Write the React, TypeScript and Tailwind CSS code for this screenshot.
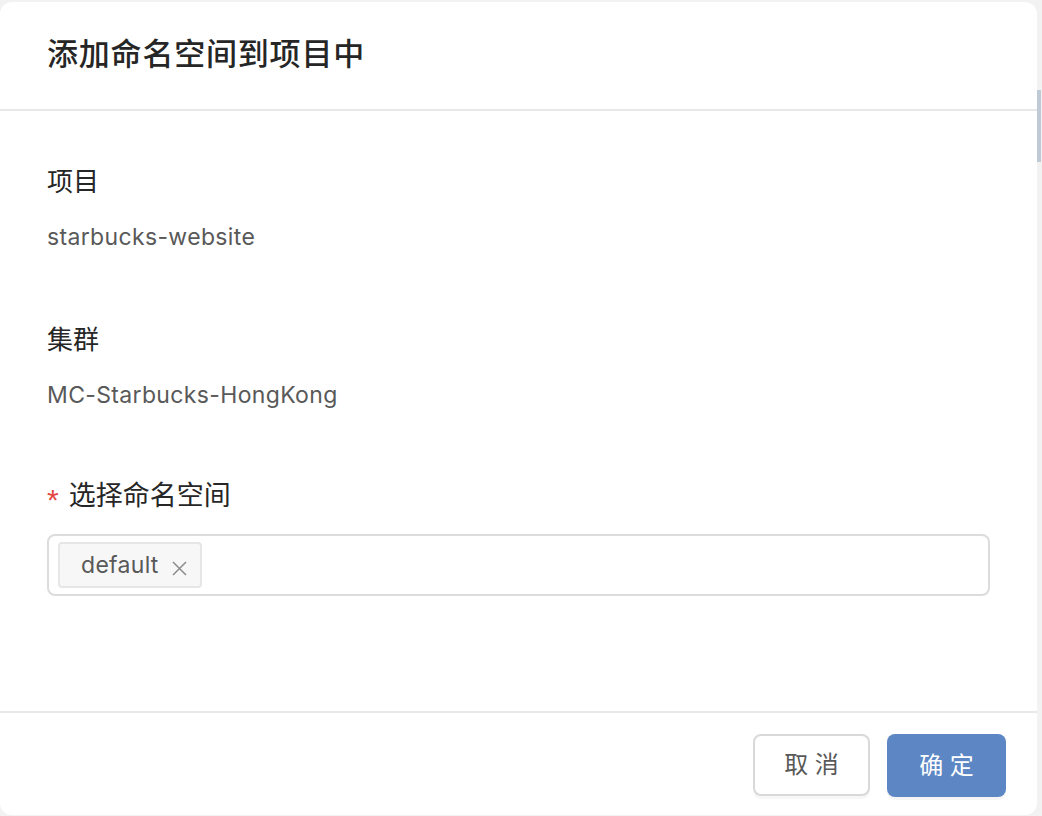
const font = { fontFamily: '"Liberation Sans", "Noto Sans CJK SC", sans-serif' };
const latin = { fontFamily: 'Inter, "Noto Sans CJK SC", sans-serif' };

function Field({ label, value }: { label: string; value: string }) {
  return (
    <div className="flex flex-col">
      <div className="text-[26px] leading-[36px] text-[#262626]">{label}</div>
      <div className="mt-[21px] text-[23px] leading-[32px] tracking-[0.35px] text-[#595959]" style={latin}>
        {value}
      </div>
    </div>
  );
}

export default function App() {
  return (
    <div className="flex h-[816px] w-[1042px] bg-[#f2f2f2] pt-[2px]" style={font}>
      {/* dialog */}
      <div className="flex h-[813px] w-[1037px] flex-col rounded-[12px] bg-white">
        <div className="flex h-[107px] items-center pl-[47px]">
          <h1 className="text-[31px] font-medium tracking-[0.8px] text-[#262626]">添加命名空间到项目中</h1>
        </div>
        <div className="h-[2px] bg-[#e8e8e8]" />

        <div className="flex flex-1 flex-col px-[47px] pt-[53px]">
          <Field label="项目" value="starbucks-website" />
          <div className="mt-[69px]">
            <Field label="集群" value="MC-Starbucks-HongKong" />
          </div>
          <div className="mt-[67px] flex flex-col">
            <div className="flex h-[36px] items-center text-[27px] leading-[36px] text-[#262626]">
              <span className="mr-[10px] mt-[8px] text-[30px] leading-none text-[#e54545]">*</span>
              选择命名空间
            </div>
            <div className="mt-[20px] flex h-[62px] w-[943px] items-center rounded-[8px] border-2 border-[#dcdcdc] px-[9px]">
              <div className="flex h-[46px] items-center rounded-[4px] border-2 border-[#e6e6e6] bg-[#f7f7f7] pl-[21px] pr-[13px]">
                <span className="text-[23px] tracking-[0.3px] text-[#595959]" style={latin}>
                  default
                </span>
                <svg className="ml-[13px] mt-[7px]" width="15" height="15" viewBox="0 0 15 15">
                  <path d="M1 1L14 14M14 1L1 14" stroke="#8c8c8c" strokeWidth="1.5" fill="none" />
                </svg>
              </div>
            </div>
          </div>
        </div>

        <div className="h-[2px] bg-[#e8e8e8]" />
        <div className="flex justify-end gap-[17px] pb-[18px] pr-[31px] pt-[21px]">
          <button className="h-[62px] w-[117px] rounded-[8px] border-2 border-[#d9d9d9] bg-white text-[24px] text-[#595959] shadow-[0_3px_0_rgba(0,0,0,0.03)]">
            取 消
          </button>
          <button className="h-[63px] w-[119px] rounded-[8px] bg-[#5c87c4] text-[24px] text-white shadow-[0_3px_0_rgba(0,0,0,0.04)]">
            确 定
          </button>
        </div>
      </div>

      {/* scrollbar */}
      <div className="flex w-[5px] flex-col">
        <div className="mt-[88px] h-[72px] w-[4px] bg-[#bfcad6]" />
      </div>
    </div>
  );
}
